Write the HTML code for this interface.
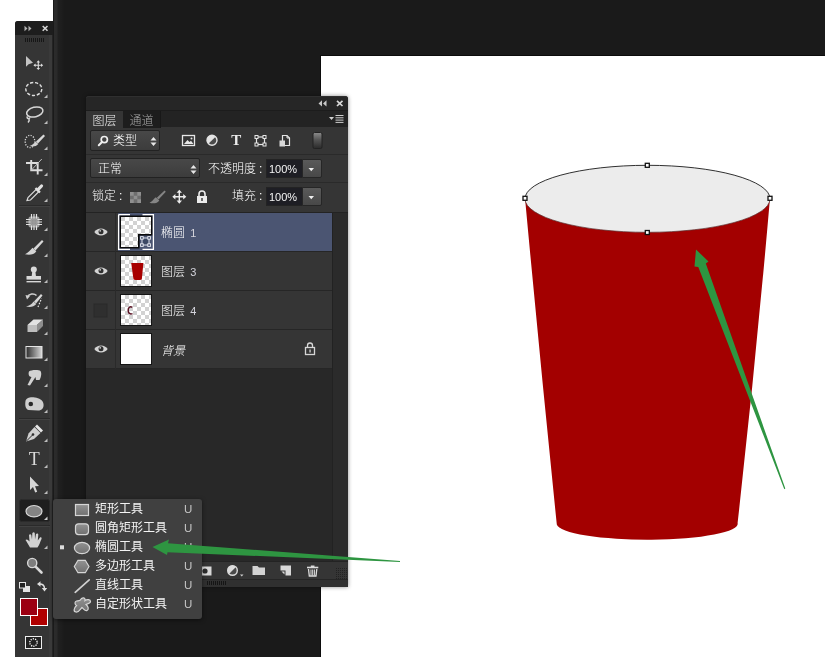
<!DOCTYPE html>
<html lang="zh-CN">
<head>
<meta charset="utf-8">
<title>Photoshop</title>
<style>
*{margin:0;padding:0;box-sizing:border-box}
html,body{width:825px;height:657px;overflow:hidden;background:#1a1a1a}
body{position:relative;font-family:"Liberation Sans","Noto Sans CJK SC",sans-serif;font-size:12px;font-weight:300;color:#e6e6e6}
.abs{position:absolute}
#menu,#panel,#tbicons,#picons{will-change:transform}
#leftwhite{left:0;top:0;width:53px;height:657px;background:#fff}
#surround{left:53px;top:0;width:772px;height:657px;background:#1a1a1a}
#canvas{left:321px;top:56px;width:504px;height:601px;background:#fff;box-shadow:0 0 0 1px #0c0c0c}
/* toolbar */
#tb{left:15px;top:21px;width:38px;height:636px;background:#353535;border-top-left-radius:3px;border-right:1px solid #242424}
#strip{left:53px;top:0;width:11px;height:657px;background:linear-gradient(90deg,#1a1a1a 0,#1a1a1a 1px,#2b2b2b 1.500px,#2a2a2a 4px,#202020 5px,#1d1d1d 9px,#1a1a1a 11px)}
#tbhead{left:0;top:0;width:38px;height:14px;background:#1d1d1d;border-top-left-radius:3px}
/* panel */
#panel{left:86px;top:96px;width:262px;height:491px;background:#353535;box-shadow:0 0 4px rgba(0,0,0,.45);border-radius:3px 3px 0 0}
#phead{left:0;top:-1px;width:262px;height:14px;background:#262626;border-top:1px solid #2f2f2f;border-radius:3px 3px 0 0}
#ptabs{left:0;top:13px;width:262px;height:17px;background:#232323;border-top:1px solid #1c1c1c}
.tab{top:0;height:17px;line-height:21px;font-size:12px;text-align:center}
.sep{left:0;width:262px;height:1px;background:#2a2a2a}
.dd{background:linear-gradient(#484848,#3c3c3c);border:1px solid #222;border-radius:2px;color:#eee}
.lrow{left:0;width:246px;height:39px;border-bottom:1px solid #262626}
.lname{left:75px;top:0;line-height:41px;font-size:12px;color:#fff;white-space:nowrap}
.lname i{font-style:normal;font-size:11px;color:#d4d4dc;margin-left:2px}
.col{margin-left:3px}
.checker{background-color:#fff;background-image:linear-gradient(45deg,#d2d2d2 25%,transparent 25%,transparent 75%,#d2d2d2 75%),linear-gradient(45deg,#d2d2d2 25%,transparent 25%,transparent 75%,#d2d2d2 75%);background-size:8px 8px;background-position:0 0,4px 4px}
#llist{left:0;top:115px;width:262px;height:350px;background:#282828;border-top:1px solid #232323}
.lrow{background:#353535}
.thumb{left:35px;top:4px;width:30px;height:30px}
#ltrack{left:246px;top:0;width:16px;height:349px;background:#2b2b2b;border-left:1px solid #222}
#pbot{left:0;top:464px;width:262px;height:18px;background:#353535;border-top:1px solid #232323}
#pgrip{left:0;top:482px;width:262px;height:8px;background:#303030;border-top:1px solid #262626}
.valbox{width:36px;height:19px;background:#1e1e24;color:#f4f4f4;font-size:11px;line-height:18px;padding-left:2px;border:1px solid #232323;border-right:0}
.valbtn{width:20px;height:19px;background:linear-gradient(#5a5a5a,#484848);border:1px solid #262626;border-radius:0 2px 2px 0}
/* menu */
#menu{left:53px;top:499px;width:149px;height:120px;background:#404040;border-radius:3px;box-shadow:0 1px 4px rgba(0,0,0,.5)}
.mi{left:0;width:149px;height:19px;line-height:21px;font-size:12px;font-weight:400;color:#f4f4f4}
.mi span.t{position:absolute;left:42px;top:0;white-space:nowrap}
.mi span.k{position:absolute;left:131px;top:0;color:#c4c4c4;font-size:11.500px}
</style>
</head>
<body>
<div class="abs" id="leftwhite"></div>
<div class="abs" id="surround"></div>
<div class="abs" id="strip"></div>
<div class="abs" id="canvas"></div>

<!-- ARTWORK -->
<svg class="abs" id="art" style="left:0;top:0" width="825" height="657" viewBox="0 0 825 657">
  <path d="M525 198 Q540 360 556.800 524.500 A90.400 16 0 0 0 737.600 523 Q756 360 770 198 Z" fill="#a30000"/>
  <ellipse cx="647.500" cy="198.800" rx="122.500" ry="33.500" fill="#ececec"/>
  <path d="M525 198.800 A122.500 33.500 0 0 1 770 198.800" fill="none" stroke="#1a1a1a" stroke-width="0.900"/>
  <path d="M525 198.800 A122.500 33.500 0 0 0 770 198.800" fill="none" stroke="#5a3030" stroke-width="0.700"/>
  <g fill="#fff" stroke="#111" stroke-width="1.300">
    <rect x="523" y="196.300" width="4" height="4"/>
    <rect x="768" y="196.300" width="4" height="4"/>
    <rect x="645.300" y="163.300" width="4" height="4"/>
    <rect x="645.300" y="230.500" width="4" height="4"/>
  </g>
</svg>

<!-- TOOLBAR -->
<div class="abs" id="tb">
  <div class="abs" style="left:34px;top:14px;width:3px;height:622px;background:#3a3a3a"></div>
  <div class="abs" id="tbhead"></div>
</div>

<!-- TOOLBAR ICONS -->
<svg class="abs" id="tbicons" style="left:0;top:0" width="60" height="657" viewBox="0 0 60 657">
  <g fill="#bdbdbd"><path d="M47.500 98 L47.500 94.5 L44 98 Z"/><path d="M47.500 124 L47.500 120.5 L44 124 Z"/><path d="M47.500 150 L47.500 146.5 L44 150 Z"/><path d="M47.500 176 L47.500 172.5 L44 176 Z"/><path d="M47.500 202 L47.500 198.5 L44 202 Z"/><path d="M47.500 231 L47.500 227.5 L44 231 Z"/><path d="M47.500 257 L47.500 253.5 L44 257 Z"/><path d="M47.500 283 L47.500 279.5 L44 283 Z"/><path d="M47.500 309 L47.500 305.5 L44 309 Z"/><path d="M47.500 335 L47.500 331.5 L44 335 Z"/><path d="M47.500 361 L47.500 357.5 L44 361 Z"/><path d="M47.500 387 L47.500 383.5 L44 387 Z"/><path d="M47.500 413 L47.500 409.5 L44 413 Z"/><path d="M47.500 442 L47.500 438.5 L44 442 Z"/><path d="M47.500 468 L47.500 464.5 L44 468 Z"/><path d="M47.500 494 L47.500 490.5 L44 494 Z"/><path d="M47.500 520 L47.500 516.5 L44 520 Z"/><path d="M47.500 549 L47.500 545.5 L44 549 Z"/></g>
  <!-- header arrows + close -->
  <g fill="#b4b4b4">
    <path d="M24.500 25.700 L27.500 28.500 L24.500 31.300 Z M28.500 25.700 L31.500 28.500 L28.500 31.300 Z"/>
  </g>
  <path d="M42.700 26 L47.500 30.800 M47.500 26 L42.700 30.800" stroke="#d4d4d4" stroke-width="1.600" fill="none"/>
  <!-- grip -->
  <g stroke="#161616" stroke-width="1">
    <path d="M25.500 38v4M27.500 38v4M29.500 38v4M31.500 38v4M33.500 38v4M35.500 38v4M37.500 38v4M39.500 38v4M41.500 38v4M43.500 38v4"/>
  </g>
  <!-- separators -->
  <g stroke="#2a2a2a" stroke-width="1">
    <path d="M19 205.500H50M19 418.500H50M19 525.500H50"/>
  </g>
  <g stroke="#414141" stroke-width="1">
    <path d="M19 206.500H50M19 419.500H50M19 526.500H50"/>
  </g>
  <!-- 1 move -->
  <path d="M26 56 L26 66.800 L28.600 64.200 L33 62.800 Z" fill="#c4c4c4"/>
  <g fill="none" stroke="#dcdcdc" stroke-width="1.100"><path d="M38.300 61.500V69M34.500 65.200H42"/></g>
  <g fill="#dcdcdc"><path d="M38.300 60.300 L40.100 62.500H36.500Z M38.300 70.100 L40.100 67.900H36.500Z M33.400 65.200 L35.600 63.400V67Z M43.200 65.200 L41 63.400V67Z"/></g>
  <!-- 2 elliptical marquee -->
  <ellipse cx="33.800" cy="89" rx="8" ry="6.500" fill="none" stroke="#dedede" stroke-width="1.400" stroke-dasharray="3.200 1.800"/>
  <!-- 3 lasso -->
  <g fill="none" stroke="#d6d6d6" stroke-width="1.500">
    <ellipse cx="34.800" cy="112" rx="8.300" ry="4.800" transform="rotate(-14 34.800 112)"/>
    <path d="M27.500 116.500 C26 118.500 29.500 119.500 29.800 117.500 M29 118.500 C29.500 120 29 121.500 28 122.500"/>
  </g>
  <!-- 4 quick selection -->
  <ellipse cx="30" cy="141.500" rx="4.800" ry="6.200" fill="none" stroke="#d8d8d8" stroke-width="1.300" stroke-dasharray="1.200 1.400"/>
  <path d="M43.500 134.500 L45 136 L38 143.500 L36 141.500 Z" fill="#d8d8d8"/>
  <path d="M35.500 141.500 L38.300 144 C36.500 146.500 32.500 147 29.500 146 C32 145 34 144 35.500 141.500 Z" fill="#d0d0d0"/>
  <!-- 5 crop -->
  <g fill="none" stroke="#dcdcdc" stroke-width="1.900">
    <path d="M31.200 160V170.300H42.500"/><path d="M26 163H37.700V174.500"/>
  </g>
  <path d="M31.200 170.300 L41.800 159" stroke="#bdbdbd" stroke-width="1" fill="none"/>
  <!-- 6 eyedropper -->
  <g>
    <path d="M27 200.500 L28 197.500 L36.500 189 L39 191.500 L30.500 200 Z" fill="none" stroke="#d8d8d8" stroke-width="1.200"/>
    <path d="M35.500 188 L40 192.500" stroke="#e0e0e0" stroke-width="2.200"/>
    <path d="M37.800 189.800 L41.500 186" stroke="#e0e0e0" stroke-width="3.200" stroke-linecap="round"/>
  </g>
  <!-- 7 healing brush (patch) -->
  <g>
    <rect x="28.500" y="216.500" width="11" height="11" rx="2" fill="#9a9a9a"/>
    <g stroke="#e2e2e2" stroke-width="1.200" fill="none">
      <path d="M26 219.500H42M26 222H42M26 224.500H42"/>
      <path d="M31.500 214V230M34 214V230M36.500 214V230"/>
    </g>
    <rect x="30.500" y="218.500" width="7" height="7" fill="#8f8f8f" opacity=".85"/>
  </g>
  <!-- 8 brush -->
  <path d="M42 240 L43.500 241.500 L35.500 250.500 L33.500 248.500 Z" fill="#d8d8d8"/>
  <path d="M32.500 247.800 L36.300 251.300 C34 255 29 255.300 25 254.300 C28 253 30 250.500 32.500 247.800 Z" fill="#d4d4d4"/>
  <!-- 9 stamp -->
  <g fill="#d8d8d8">
    <circle cx="33.800" cy="269.500" r="3"/>
    <path d="M32.300 271 H35.300 L36 276.500 H31.600 Z"/>
    <rect x="26.500" y="276" width="14.500" height="3.600"/>
    <rect x="26.500" y="281" width="14.500" height="1.400"/>
  </g>
  <!-- 10 history brush -->
  <path d="M41 294 L42.500 295.500 L36 303.500 L34 301.500 Z" fill="#d8d8d8"/>
  <path d="M33.500 301.500 L36.300 304 C34 307 30 307.300 26 306.500 C29.500 305.500 31.500 304.500 33.500 301.500 Z" fill="#d0d0d0"/>
  <path d="M27 297.500 C29 293.500 34 293 36.500 295.500" fill="none" stroke="#d0d0d0" stroke-width="1.500"/>
  <path d="M25.500 295 L30 296 L27 299.500 Z" fill="#d0d0d0"/>
  <path d="M38 307 L41.500 298.500" stroke="#e8e8e8" stroke-width="1.200" stroke-dasharray="1.500 1.500"/>
  <!-- 11 eraser -->
  <path d="M27.500 325 L33.500 319.500 L43 319.500 L37 325 Z" fill="#e2e2e2"/>
  <path d="M27.500 325 H37 V332 H27.500 Z" fill="#bdbdbd"/>
  <path d="M37 325 L43 319.500 V326 L37 332 Z" fill="#8e8e8e"/>
  <!-- 12 gradient -->
  <defs><linearGradient id="gr" x1="0" x2="1"><stop offset="0" stop-color="#2b2b2b"/><stop offset="1" stop-color="#d8d8d8"/></linearGradient></defs>
  <rect x="26" y="346.500" width="16" height="11.500" fill="url(#gr)" stroke="#e4e4e4" stroke-width="1"/>
  <!-- 13 smudge -->
  <path d="M29 371.500 C31 369.500 39 369.500 40.500 371 C42 373 41 378 39.500 380 L36 380 L35.500 377 L30 385.500 L27.500 385 L31.500 377 C29 377 28 374 29 371.500 Z" fill="#d2d2d2"/>
  <!-- 14 sponge -->
  <path d="M25.500 401 C26 397.500 31 396.500 35 397.500 C39 398 43 400 43.500 404 C44 408 42 410.500 38 410.500 L28.500 410 C25 409 25 404 25.500 401 Z" fill="#cfcfcf"/>
  <circle cx="30.800" cy="404" r="2.300" fill="#2a2a2a"/>
  <!-- 15 pen -->
  <path d="M37 424.500 L43 430.500 L41 432.500 L35 426.500 Z" fill="#e6e6e6"/>
  <path d="M34.500 427 L40.500 433 L34 439 L26 441.500 L28.500 433.500 Z" fill="#cfcfcf"/>
  <path d="M26.500 441 L32.500 435" stroke="#2e2e2e" stroke-width="1"/>
  <circle cx="33" cy="434.500" r="1.300" fill="#2e2e2e"/>
  <!-- 16 type -->
  <text x="34.200" y="465" font-family="'Liberation Serif',serif" font-size="18" text-anchor="middle" fill="#dadada">T</text>
  <!-- 17 path selection -->
  <path d="M30 476.500 L30 490 L33 487 L35.200 492.500 L37.200 491.700 L35 486.300 L39 486 Z" fill="#d6d6d6"/>
  <!-- 18 ellipse (selected) -->
  <rect x="19.500" y="499.500" width="30" height="22" rx="2" fill="#1e1e1e" stroke="#2b2b2b"/>
  <ellipse cx="34" cy="511.200" rx="8" ry="5.700" fill="#848484" stroke="#d6d6d6" stroke-width="1.200"/>
  <path d="M47.500 520 L47.500 516.500 L44 520 Z" fill="#d0d0d0"/>
  <!-- 19 hand -->
  <path d="M30 547.500 C28 544 26.500 541.500 25.500 540 C26.500 538.800 28 539.500 29.500 541.500 L29 535 C29.500 533.800 31 534 31.300 535 L32 539.500 L32.300 533.200 C33 532 34.500 532.200 34.800 533.200 L35 539.500 L36 534 C36.800 533 38.200 533.300 38.300 534.500 L37.800 540.500 L40 537.500 C41 537 42 537.800 41.500 539 C40 542 39.500 545 37.500 547.500 Z" fill="#d2d2d2"/>
  <!-- 20 zoom -->
  <circle cx="32.200" cy="563" r="4.600" fill="#7d7d7d" stroke="#d8d8d8" stroke-width="1.400"/>
  <path d="M35.800 566.800 L41.500 572.500" stroke="#d8d8d8" stroke-width="2.600" stroke-linecap="round"/>
  <!-- default colors -->
  <rect x="23.500" y="586.500" width="6" height="5" fill="#e4e4e4" stroke="#e4e4e4"/>
  <rect x="19.500" y="582.500" width="6" height="5.500" fill="#222" stroke="#e4e4e4"/>
  <!-- swap -->
  <path d="M39.500 584 C43 584 44.500 586 44.500 588.500" fill="none" stroke="#dedede" stroke-width="1.400"/>
  <path d="M37 584 L40.500 581.300 V586.700 Z M44.500 591.500 L41.800 588 H47.200 Z" fill="#dedede"/>
  <!-- swatches -->
  <rect x="30.500" y="608.500" width="17" height="17" fill="#b00000" stroke="#fff"/>
  <rect x="20.500" y="598.500" width="17" height="17" fill="#9c0012" stroke="#fff"/>
  <!-- quick mask -->
  <rect x="25.500" y="636.500" width="16" height="12" fill="#222" stroke="#eee"/>
  <circle cx="33.500" cy="642.500" r="3.700" fill="none" stroke="#fff" stroke-width="1.400" stroke-dasharray="1.200 1.120"/>
</svg>

<!-- LAYERS PANEL -->
<div class="abs" id="panel">
 <div class="abs" style="left:0;top:1px;width:262px;height:490px;white-space:nowrap">
  <div class="abs" id="phead"></div>
  <div class="abs" id="ptabs">
    <div class="abs tab" style="left:0;width:37px;background:#353535;color:#f0f0f0">图层</div>
    <div class="abs tab" style="left:37px;width:38px;background:#1d1d1d;color:#a8a8a8;border-right:1px solid #181818">通道</div>
  </div>
  <!-- filter row -->
  <div class="abs dd" style="left:4px;top:33px;width:70px;height:21px"></div>
  <div class="abs" style="left:27px;top:34px;line-height:21px;font-size:12px;color:#fff">类型</div>
  <div class="abs sep" style="top:57px"></div>
  <!-- blend row -->
  <div class="abs dd" style="left:4px;top:61px;width:110px;height:20px"></div>
  <div class="abs" style="left:12px;top:62px;line-height:21px;font-size:12px;color:#fff">正常</div>
  <div class="abs" style="left:122px;top:62px;line-height:21px;font-size:12px;color:#fff;white-space:nowrap">不透明度<span class="col">:</span></div>
  <div class="abs valbox" style="left:180px;top:62px">100%</div>
  <div class="abs valbtn" style="left:216px;top:62px"></div>
  <div class="abs sep" style="top:85px"></div>
  <!-- lock row -->
  <div class="abs" style="left:6px;top:89px;line-height:21px;font-size:12px;color:#fff;white-space:nowrap">锁定<span class="col">:</span></div>
  <div class="abs" style="left:146px;top:89px;line-height:21px;font-size:12px;color:#fff;white-space:nowrap">填充<span class="col">:</span></div>
  <div class="abs valbox" style="left:180px;top:90px">100%</div>
  <div class="abs valbtn" style="left:216px;top:90px"></div>
  <!-- layer list -->
  <div class="abs" id="llist">
    <div class="abs lrow" style="top:0"><div class="abs" style="left:32px;top:0;width:214px;height:38px;background:#4b5572"></div><div class="abs lname">椭圆 <i>1</i></div></div>
    <div class="abs lrow" style="top:39px"><div class="abs checker thumb"></div><div class="abs lname">图层 <i>3</i></div></div>
    <div class="abs lrow" style="top:78px"><div class="abs checker thumb"></div><div class="abs lname">图层 <i>4</i></div></div>
    <div class="abs lrow" style="top:117px"><div class="abs thumb" style="background:#fff"></div><div class="abs lname" style="font-style:italic;left:75px;top:1px">背景</div></div>
    <div class="abs" style="left:29px;top:0;width:1px;height:156px;background:#2a2a2a"></div>
    <div class="abs" id="ltrack"></div>
  </div>
  <!-- bottom bar -->
  <div class="abs" id="pbot"></div>
  <div class="abs" id="pgrip"></div>
 </div>
</div>

<!-- PANEL ICONS -->
<svg class="abs" id="picons" style="left:0;top:0" width="360" height="600" viewBox="0 0 360 600">
  <!-- header collapse + close -->
  <path d="M322 100.300 L322 106.500 L318.500 103.400 Z M326.500 100.300 L326.500 106.500 L323 103.400 Z" fill="#c8c8c8"/>
  <path d="M337 100.800 L342.500 106 M342.500 100.800 L337 106" stroke="#d8d8d8" stroke-width="1.700" fill="none"/>
  <!-- panel menu -->
  <path d="M329 117 H334 L331.500 120 Z" fill="#d0d0d0"/>
  <path d="M335.500 115.500H343.500M335.500 117.800H343.500M335.500 120.100H343.500M335.500 122.400H343.500" stroke="#cfcfcf" stroke-width="1"/>
  <!-- magnifier -->
  <circle cx="104.300" cy="139.600" r="3.100" fill="none" stroke="#f0f0f0" stroke-width="1.700"/>
  <path d="M102 142 L98.800 145.300" stroke="#f0f0f0" stroke-width="2" stroke-linecap="round"/>
  <!-- dd arrows -->
  <g fill="#e6e6e6">
    <path d="M153.500 137 L156.500 140.500 H150.500 Z M153.500 146 L156.500 142.500 H150.500 Z"/>
    <path d="M193.500 165 L196.500 168.500 H190.500 Z M193.500 174 L196.500 170.500 H190.500 Z"/>
  </g>
  <!-- filter: image -->
  <rect x="182.500" y="135.500" width="12" height="10" fill="none" stroke="#e8e8e8" stroke-width="1.300"/>
  <path d="M184 144 L187.500 140 L189.500 142 L191 140.800 L193.500 144 Z" fill="#e8e8e8"/>
  <circle cx="191.500" cy="138.500" r="1" fill="#e8e8e8"/>
  <!-- filter: adjustment -->
  <circle cx="212" cy="140.200" r="5" fill="#4a4a4a" stroke="#e4e4e4" stroke-width="1.400"/>
  <path d="M208.400 143.700 A5 5 0 0 1 215.600 136.700 Z" fill="#e4e4e4"/>
  <!-- filter: T -->
  <text x="236.200" y="145" font-family="'Liberation Serif',serif" font-weight="bold" font-size="15" text-anchor="middle" fill="#ececec">T</text>
  <!-- filter: shape -->
  <rect x="256.500" y="137" width="8" height="7.500" fill="none" stroke="#e6e6e6" stroke-width="1.200"/>
  <g fill="#353535" stroke="#e6e6e6" stroke-width="1">
    <rect x="255" y="135.500" width="3" height="3"/><rect x="263" y="135.500" width="3" height="3"/>
    <rect x="255" y="143" width="3" height="3"/><rect x="263" y="143" width="3" height="3"/>
  </g>
  <!-- filter: smart object -->
  <path d="M282.500 135.500 H287 L289.500 138 V145.500 H282.500 Z" fill="none" stroke="#e4e4e4" stroke-width="1.200"/>
  <path d="M287 135.500 V138 H289.500" fill="none" stroke="#e4e4e4" stroke-width="1"/>
  <rect x="279.500" y="140.500" width="5.500" height="6" fill="#d8d8d8"/>
  <!-- filter toggle -->
  <defs><linearGradient id="tg" x1="0" y1="0" x2="0" y2="1"><stop offset="0" stop-color="#8c8c8c"/><stop offset=".45" stop-color="#555"/><stop offset="1" stop-color="#2a2a2a"/></linearGradient></defs>
  <rect x="313" y="132.500" width="9" height="16" rx="1.500" fill="url(#tg)" stroke="#222" stroke-width="1"/>
  <!-- value dropdown arrows -->
  <path d="M308.500 168 H314 L311.250 171.200 Z M308.500 196 H314 L311.250 199.200 Z" fill="#f0f0f0"/>
  <!-- lock: transparency -->
  <g>
    <rect x="130" y="192" width="11" height="11" fill="#6e6e6e"/>
    <path d="M130 192h3.700v3.700h-3.700z M137.300 192h3.700v3.700h-3.700z M133.700 195.700h3.600v3.600h-3.600z M130 199.300h3.700v3.700h-3.700z M137.300 199.300h3.700v3.700h-3.700z" fill="#8f8f8f"/>
  </g>
  <!-- lock: brush -->
  <path d="M164.500 190.500 L165.800 191.800 L158.500 199.500 L156.800 197.800 Z" fill="#858585"/>
  <path d="M155.800 197.300 L159.300 200.500 C157.500 203.600 153 203.800 149.500 202.800 C152 201.600 153.300 199.500 155.800 197.300 Z" fill="#858585"/>
  <!-- lock: move -->
  <g stroke="#ececec" stroke-width="1.400" fill="none"><path d="M179.300 191.500V202M174 196.700H184.600"/></g>
  <path d="M179.300 189.700 L182 192.800H176.600Z M179.300 203.700 L182 200.600H176.600Z M172.300 196.700 L175.400 194V199.400Z M186.300 196.700 L183.200 194V199.400Z" fill="#ececec"/>
  <!-- lock: padlock -->
  <rect x="197" y="196" width="10" height="7" fill="#ececec"/>
  <path d="M199 196 V194 A3 3 0 0 1 205 194 V196" fill="none" stroke="#ececec" stroke-width="1.600"/>
  <rect x="201.300" y="198" width="1.400" height="3" fill="#353535"/>
  <!-- eyes -->
  <g id="eye1">
    <path d="M94.300 232 C97 227.200 105 227.200 107.700 232 C105 236.600 97 236.600 94.300 232 Z" fill="#d4d4d4"/>
    <circle cx="101" cy="231.700" r="2.500" fill="#2f2f2f"/>
    <circle cx="100.200" cy="230.800" r=".9" fill="#cfcfcf"/>
  </g>
  <use href="#eye1" y="39"/>
  <use href="#eye1" y="117"/>
  <!-- empty eye box -->
  <rect x="94" y="304" width="13" height="13" fill="#2f2f2f" stroke="#2a2a2a"/>
  <!-- thumb 1 (selected, vector mask) -->
  <defs><pattern id="ck" x="121" y="217" width="8" height="8" patternUnits="userSpaceOnUse"><rect width="8" height="8" fill="#fff"/><rect width="4" height="4" fill="#d2d2d2"/><rect x="4" y="4" width="4" height="4" fill="#d2d2d2"/></pattern></defs>
  <g>
    <path d="M119.500 215.500 H152.500 V235.500 H139.500 V248.500 H119.500 Z" fill="#0a0a0a"/>
    
    <path d="M121 217 H151 V234 H138 V247 H121 Z" fill="url(#ck)"/>
    <path d="M118.600 214.600 H130 M142.500 214.600 H153.400 V249.400 H142.500 M130 249.400 H118.600 V214.600" stroke="#fff" stroke-width="1.300" fill="none"/>
    <rect x="142" y="238" width="7" height="7" fill="#3c4864" stroke="#dfe3ee" stroke-width="1"/>
    <g fill="#4b5572" stroke="#eef0f6" stroke-width="0.900">
      <rect x="140.600" y="236.600" width="2.600" height="2.600"/><rect x="147.800" y="236.600" width="2.600" height="2.600"/>
      <rect x="140.600" y="243.800" width="2.600" height="2.600"/><rect x="147.800" y="243.800" width="2.600" height="2.600"/>
    </g>
  </g>
  <!-- thumbs 2-4 content -->
  <g fill="none" stroke="#151515" stroke-width="1"><rect x="120.500" y="255.500" width="31" height="31"/><rect x="120.500" y="294.500" width="31" height="31"/><rect x="120.500" y="333.500" width="31" height="31"/></g>
  <path d="M131.200 263 H143.400 L141.800 279.500 Q137.500 280.500 133.500 279.500 Z" fill="#a80000"/>
  <path d="M132.300 307.200 C129.500 306 128 308 128.200 310.500 C128.300 313 130 314.800 132.500 313.600" fill="none" stroke="#5a1224" stroke-width="1.500"/>
  <!-- background layer lock -->
  <rect x="305.500" y="347.500" width="9" height="7" fill="none" stroke="#d6d6d6" stroke-width="1.300"/>
  <path d="M307.500 347.500 V345.500 A2.500 2.500 0 0 1 312.500 345.500 V347.500" fill="none" stroke="#d6d6d6" stroke-width="1.300"/>
  <rect x="309.400" y="349.500" width="1.300" height="3" fill="#d6d6d6"/>
  <!-- bottom icons -->
  <rect x="198" y="566.500" width="13.500" height="9" fill="#d8d8d8"/>
  <circle cx="205" cy="571" r="2.600" fill="#2c2c2c"/>
  <circle cx="232.500" cy="570.500" r="4.800" fill="#4a4a4a" stroke="#dcdcdc" stroke-width="1.400"/>
  <path d="M229 573.900 A4.800 4.800 0 0 1 235.900 567 Z" fill="#dcdcdc"/>
  <path d="M240 574.500 H243.500 L241.750 576.500 Z" fill="#cfcfcf"/>
  <path d="M252.500 566 H257.500 L259 567.500 H265 V575 H252.500 Z" fill="#d2d2d2"/>
  <path d="M280.500 565.500 H291 V575.500 H285.500 V570.500 H280.500 Z" fill="#d8d8d8"/>
  <path d="M281.500 571.500 H284.500 V574.500 Z" fill="#d8d8d8"/>
  <g fill="none" stroke="#dcdcdc" stroke-width="1.300">
    <path d="M308.500 569 L309.300 576 H316 L316.800 569"/>
    <path d="M311 569.500V575.500M312.700 569.500V575.500M314.400 569.500V575.500" stroke-width="1"/>
  </g>
  <path d="M307 567.500 H318.300" stroke="#dcdcdc" stroke-width="1.600"/>
  <path d="M310.800 566.300 H314.500" stroke="#dcdcdc" stroke-width="1.600"/>
  <!-- bottom grips -->
  <g stroke="#151515" stroke-width="1">
    <path d="M207.500 581v4M209.500 581v4M211.500 581v4M213.500 581v4M215.500 581v4M217.500 581v4M219.500 581v4M221.500 581v4M223.500 581v4M225.500 581v4"/>
  </g>
  <g stroke="#222" stroke-width="1" stroke-dasharray="1 1">
    <path d="M336 568.500H347M336 570.500H347M336 572.500H347M336 574.500H347M336 576.500H347M336 578.500H347"/>
  </g>
</svg>

<!-- FLYOUT MENU -->
<div class="abs" id="menu">
  <div class="abs mi" style="top:0"><span class="t">矩形工具</span><span class="k">U</span></div>
  <div class="abs mi" style="top:19px"><span class="t">圆角矩形工具</span><span class="k">U</span></div>
  <div class="abs mi" style="top:38px"><span class="t">椭圆工具</span><span class="k">U</span></div>
  <div class="abs mi" style="top:57px"><span class="t">多边形工具</span><span class="k">U</span></div>
  <div class="abs mi" style="top:76px"><span class="t">直线工具</span><span class="k">U</span></div>
  <div class="abs mi" style="top:95px"><span class="t">自定形状工具</span><span class="k">U</span></div>
</div>

<!-- MENU ICONS -->
<svg class="abs" id="micons" style="left:0;top:0" width="210" height="657" viewBox="0 0 210 657">
  <defs><linearGradient id="mg" x1="0" y1="0" x2="0" y2="1"><stop offset="0" stop-color="#929292"/><stop offset="1" stop-color="#707070"/></linearGradient></defs>
  <g fill="url(#mg)" stroke="#d6d6d6" stroke-width="1.200">
    <rect x="75.500" y="504.500" width="13" height="11"/>
    <rect x="75.500" y="523.800" width="13" height="10.800" rx="3"/>
    <ellipse cx="82" cy="548" rx="7.600" ry="5.700"/>
    <path d="M74.300 566.500 L78 560.300 H85.300 L89 566.500 L85.300 572.700 H78 Z"/>
    <path d="M81.500 598.500 C83.500 597 85.500 598 85 600.500 C87 599 90.500 599.500 90.500 601.500 C90.500 603.500 87 604 86 604.500 C88.500 606.500 89 609.500 87 610.500 C85 611.500 83.500 608.500 82 607.500 C80.500 609 79 612.500 76 612 C73 611.500 74 608 76.500 605.500 C74.500 604.500 74.500 601.500 76.500 601 C78.500 600.500 80 601.500 81.500 598.500 Z"/>
  </g>
  <path d="M89.200 579.800 L75.200 592.300" stroke="#d0d0d0" stroke-width="1.700" stroke-linecap="round"/>
  <rect x="60" y="545.300" width="4" height="4" fill="#dedede"/>
</svg>

<!-- ARROWS -->
<svg class="abs" id="arrows" style="left:0;top:0" width="825" height="657" viewBox="0 0 825 657">
  <path d="M696 249.500 L708.500 261.500 L705.800 263.500 L785.300 488.600 L784.300 489.200 L698.300 267 L694.500 266.500 Z" fill="#2e9541"/>
  <path d="M152.500 547 L169 539.500 L168 543.300 L400 561 L400 562 L167.500 552.200 L167 555 Z" fill="#2e9541"/>
</svg>
</body>
</html>
